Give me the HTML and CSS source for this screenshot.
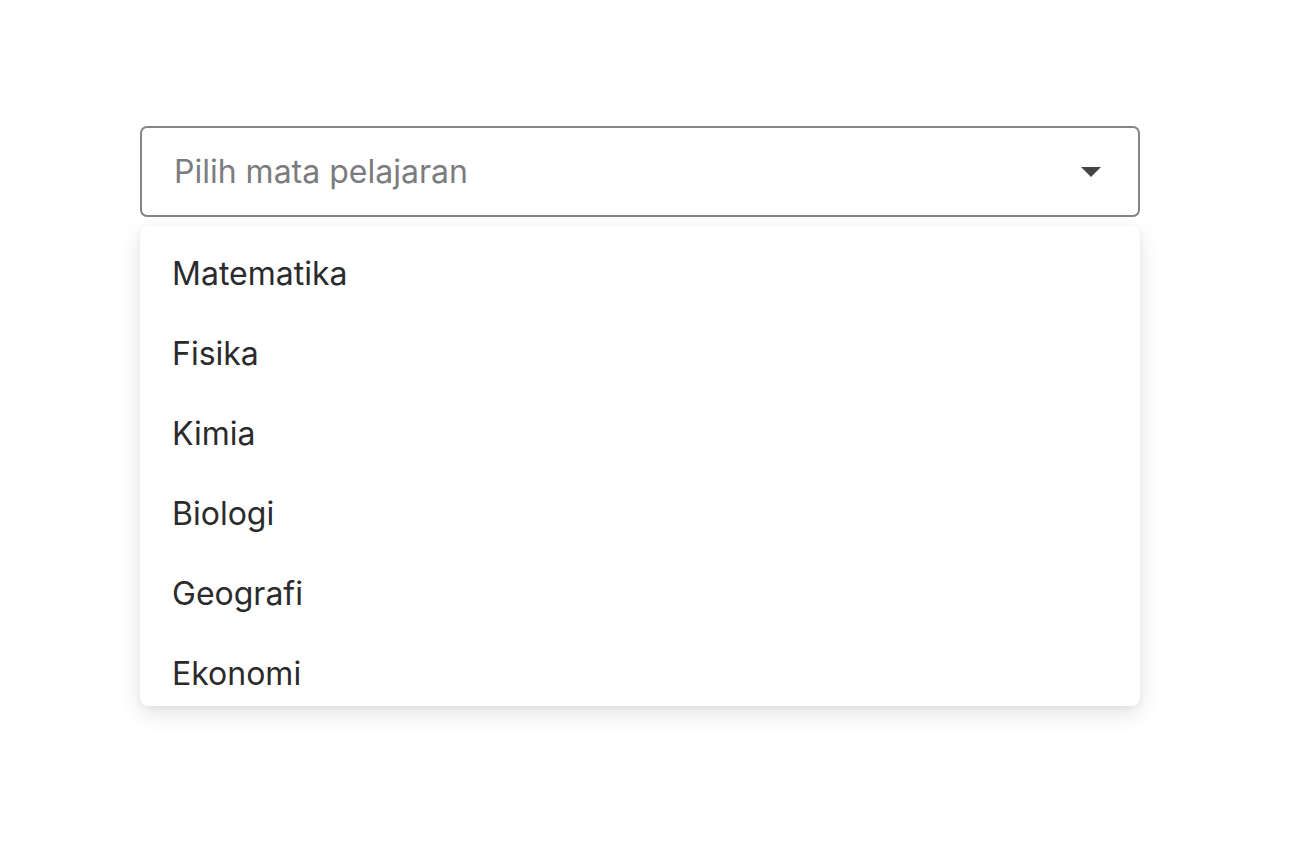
FILE: index.html
```html
<!DOCTYPE html>
<html lang="id">
<head>
    <meta charset="UTF-8">
    <meta name="viewport" content="width=device-width, initial-scale=1.0">
    <title>Pilih mata pelajaran</title>
    <link rel="stylesheet" href="styles.css">
</head>
<body>

    <div class="field">
        <div class="select">
            <span class="placeholder">Pilih mata pelajaran</span>
            <svg class="arrow" width="20" height="10" viewBox="0 0 20 10">
                <path d="M0 0 L20 0 L10 10 Z" fill="#444"/>
            </svg>
        </div>

        <!-- Daftar pilihan -->
        <ul class="menu">
            <li>Matematika</li>
            <li>Fisika</li>
            <li>Kimia</li>
            <li>Biologi</li>
            <li>Geografi</li>
            <li>Ekonomi</li>
        </ul>
    </div>

</body>
</html>
```

FILE: styles.css
```css
body {
    margin: 0;
    font-family: Inter, 'Noto Sans', sans-serif;
    background: #fff;
    min-height: 100vh;
}

.field {
    width: 1000px;
    margin-left: 140px;
    padding-top: 126px;
}

.select {
    box-sizing: border-box;
    height: 91px;
    border: 2px solid #858588;
    border-radius: 7px;
    display: flex;
    align-items: center;
    justify-content: space-between;
    padding: 0 37px 0 32px;
}

.placeholder {
    font-size: 32px;
    color: #7c7c80;
}

.arrow {
    display: block;
}

.menu {
    list-style: none;
    margin: 9px 0 0;
    padding: 7px 0 0;
    max-height: 473px;
    overflow: hidden;
    background: #fff;
    border-radius: 8px;
    box-shadow: 0 8px 22px rgba(0,0,0,0.11), 0 2px 6px rgba(0,0,0,0.05);
}

.menu li {
    height: 80px;
    display: flex;
    align-items: center;
    padding-left: 32px;
    font-size: 32px;
    color: #2b2b2d;
}
```
